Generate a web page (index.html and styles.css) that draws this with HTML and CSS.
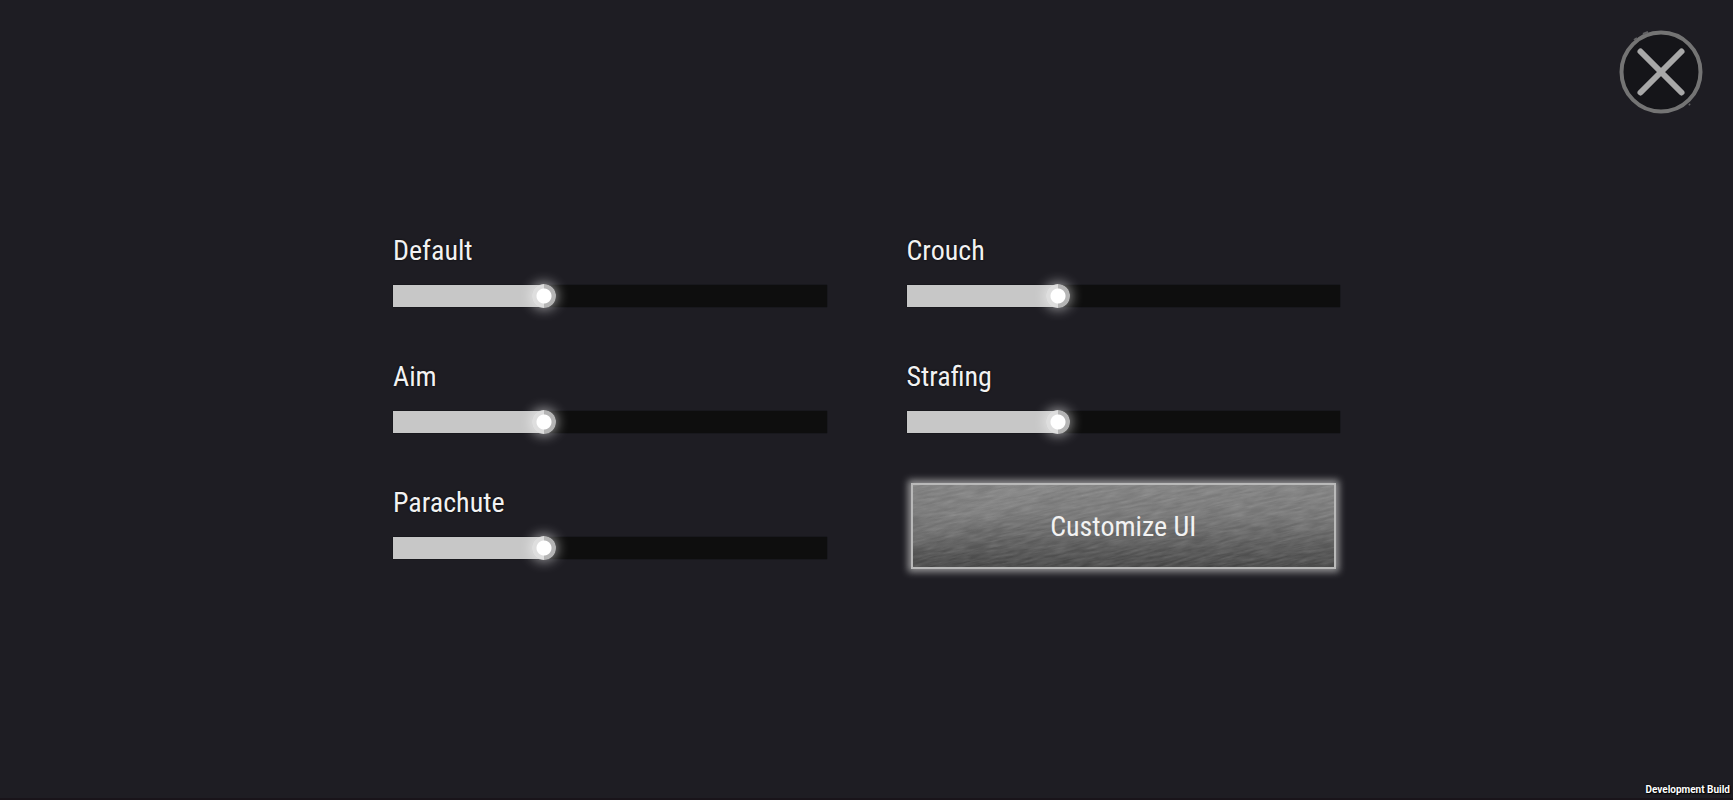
FILE: index.html
```
<!DOCTYPE html>
<html lang="en">
  <head>
    <meta charset="UTF-8" />
    <meta name="viewport" content="width=device-width, initial-scale=1.0" />
    <title>Sensitivity</title>
    <link rel="stylesheet" href="styles.css">
  </head>
  <body>
    <header class="top-bar">
      <button type="button" class="close-button" aria-label="Close">
        <svg viewBox="0 0 84 84" width="84" height="84" aria-hidden="true">
          <circle cx="42" cy="42" r="39.5" fill="#151519" stroke="#747474" stroke-width="4" />
          <path d="M15 10L18 8M24 4L29 2M70 74L71 75" fill="none" stroke="#626264" stroke-width="2" />
          <path d="M21.5 21.5L62.5 62.5M62.5 21.5L21.5 62.5" stroke="#a8a8a8" stroke-width="6" stroke-linecap="round" />
        </svg>
      </button>
    </header>

    <main class="settings">
      <div class="field">
        <label for="default">Default</label>
        <input type="range" id="default" min="0" max="100" value="34" style="--value: 34">
      </div>
      <div class="field">
        <label for="crouch">Crouch</label>
        <input type="range" id="crouch" min="0" max="100" value="34" style="--value: 34">
      </div>
      <div class="field">
        <label for="aim">Aim</label>
        <input type="range" id="aim" min="0" max="100" value="34" style="--value: 34">
      </div>
      <div class="field">
        <label for="strafing">Strafing</label>
        <input type="range" id="strafing" min="0" max="100" value="34" style="--value: 34">
      </div>
      <div class="field">
        <label for="parachute">Parachute</label>
        <input type="range" id="parachute" min="0" max="100" value="34" style="--value: 34">
      </div>
      <button type="button" class="customize-button">
        <svg class="metal" aria-hidden="true">
          <filter id="brushed" x="0" y="0" width="100%" height="100%">
            <feTurbulence type="fractalNoise" baseFrequency="0.05 0.4" numOctaves="3" seed="4" />
            <feColorMatrix values="0 0 0 0 1  0 0 0 0 1  0 0 0 0 1  0.25 0 0 0 -0.07" />
          </filter>
          <rect x="-60" y="-60" width="560" height="260" transform="rotate(-12)" filter="url(#brushed)" />
        </svg>
        <span>Customize UI</span>
      </button>
    </main>

    <footer class="build-label">Development Build</footer>

    <script>
      // Keep the filled part of each track under its thumb
      document.querySelectorAll('input[type="range"]').forEach(function(slider) {
        slider.addEventListener('input', function() {
          slider.style.setProperty('--value', slider.value);
        });
      });
    </script>
  </body>
</html>
```
FILE: styles.css
```
* {
    box-sizing: border-box;
}

body {
    display: flex;
    flex-direction: column;
    min-height: 100vh;
    margin: 0;
    border-bottom: 2px solid #19141a;
    background-color: #1e1d23;
    color: #f2f2f2;
    font-family: "Roboto Condensed", "Liberation Sans Narrow", "Liberation Sans", sans-serif;
}

button {
    font-family: inherit;
    color: inherit;
    cursor: pointer;
}

.top-bar {
    display: flex;
    justify-content: flex-end;
    padding: 30px 30px 0;
}

.close-button {
    padding: 0;
    border: none;
    border-radius: 50%;
    background: none;
}

.close-button svg {
    display: block;
    overflow: visible;
}

/* Sliders */
.settings {
    display: grid;
    grid-template-columns: 1fr 1fr;
    align-items: start;
    gap: 50px 80px;
    width: 100%;
    max-width: 995px;
    margin: 0 auto;
    padding: 117px 24px 50px;
}

.field {
    display: flex;
    flex-direction: column;
    gap: 14px;
}

.field label {
    font-size: 28px;
    line-height: 40px;
    text-shadow: 0 0 2px #000;
}

input[type="range"] {
    --fill: calc(12px + (100% - 24px) * var(--value) / 100);
    appearance: none;
    width: 100%;
    height: 22px;
    margin: 0;
    background: linear-gradient(to right, #c7c7c7 var(--fill), #0e0e0e var(--fill));
    box-shadow: 0 0 1px #000;
    cursor: pointer;
}

input[type="range"]::-webkit-slider-thumb {
    appearance: none;
    width: 24px;
    height: 24px;
    border-radius: 50%;
    background:
        radial-gradient(circle closest-side, #fff 7px, transparent 8px),
        linear-gradient(to right, #dedede 50%, #b4b4b4 50%);
    box-shadow: 0 0 12px 2px rgba(255, 255, 255, 0.5);
}

/* Brushed metal button */
.customize-button {
    position: relative;
    height: 86px;
    margin: 0 4px;
    padding: 2px 6px 0;
    border: 2px solid #b9b9b9;
    background:
        linear-gradient(155deg, transparent 14%, rgba(255, 255, 255, 0.05) 20%, transparent 28%),
        linear-gradient(to bottom, #7f7f7f, #757575 35%, #444);
    box-shadow: 0 0 7px 3px rgba(190, 190, 190, 0.75);
    font-size: 28px;
    line-height: 40px;
}

.customize-button .metal {
    position: absolute;
    inset: 0;
    width: 100%;
    height: 100%;
}

.customize-button span {
    position: relative;
}

.build-label {
    margin-top: auto;
    padding: 0 3px 1px;
    color: #fff;
    font-family: Roboto, sans-serif;
    font-size: 10px;
    font-weight: bold;
    line-height: 14px;
    text-align: right;
    text-shadow: 0 0 2px #000, 1px 1px 1px #000;
}
```
